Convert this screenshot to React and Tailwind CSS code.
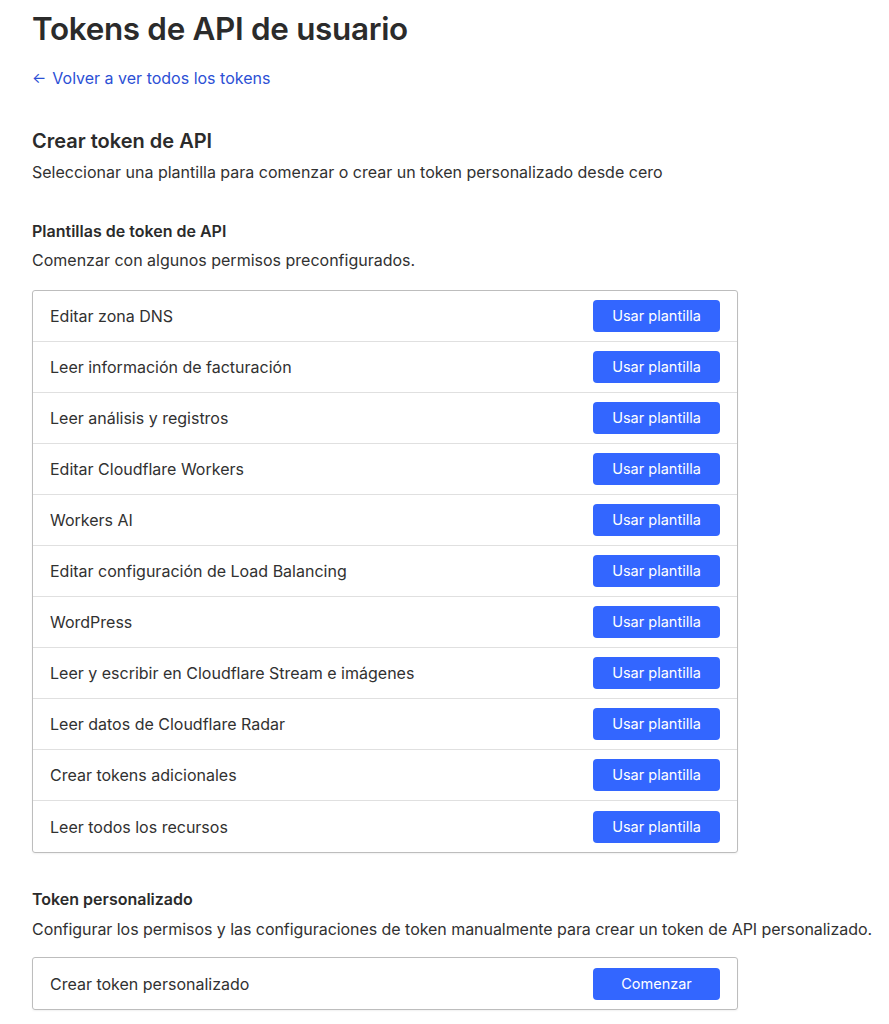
import React from 'react';

const templates = [
  'Editar zona DNS',
  'Leer información de facturación',
  'Leer análisis y registros',
  'Editar Cloudflare Workers',
  'Workers AI',
  'Editar configuración de Load Balancing',
  'WordPress',
  'Leer y escribir en Cloudflare Stream e imágenes',
  'Leer datos de Cloudflare Radar',
  'Crear tokens adicionales',
  'Leer todos los recursos',
];

function Row({ label, action, last }) {
  return (
    <div className={`flex items-center justify-between h-[51px] pl-[17px] pr-[17px] ${last ? '' : 'border-b border-[#e0e0e0]'}`}>
      <span className="text-[16px] text-[#313131]">{label}</span>
      <button className="w-[127px] h-[32px] rounded-[4px] bg-[#3366ff] text-white text-[14.5px]">{action}</button>
    </div>
  );
}

export default function App() {
  return (
    <div className="min-h-screen bg-white text-[#313131] px-8 pt-[9px] pb-4" style={{ fontFamily: 'Inter, "Noto Sans", sans-serif' }}>
      <h1 className="text-[31.4px] leading-[40px] font-semibold tracking-[-0.3px] text-[#2b2b2b]">Tokens de API de usuario</h1>

      <a href="#" className="mt-[17px] inline-flex items-center gap-[6px] text-[16px] text-[#2c50d5]">
        <span className="text-[15px]">←</span>
        <span>Volver a ver todos los tokens</span>
      </a>

      <h2 className="mt-[37px] text-[20px] leading-[28px] font-semibold text-[#2b2b2b]">Crear token de API</h2>
      <p className="mt-[5px] text-[16px] leading-[24px]">Seleccionar una plantilla para comenzar o crear un token personalizado desde cero</p>

      <h3 className="mt-[35px] text-[16px] leading-[24px] font-semibold text-[#2b2b2b]">Plantillas de token de API</h3>
      <p className="mt-[5px] text-[16px] leading-[24px]">Comenzar con algunos permisos preconfigurados.</p>

      <div className="mt-[18px] w-[706px] border border-[#bdbdbd] rounded-[3px] shadow-[0_1px_2px_rgba(0,0,0,0.06)]">
        {templates.map((t, i) => (
          <Row key={t} label={t} action="Usar plantilla" last={i === templates.length - 1} />
        ))}
      </div>

      <h3 className="mt-[34px] text-[16px] leading-[24px] font-semibold text-[#2b2b2b]">Token personalizado</h3>
      <p className="mt-[6px] text-[16px] leading-[24px] whitespace-nowrap tracking-[-0.05px]">Configurar los permisos y las configuraciones de token manualmente para crear un token de API personalizado.</p>

      <div className="mt-[16px] w-[706px] border border-[#bdbdbd] rounded-[3px] shadow-[0_1px_2px_rgba(0,0,0,0.06)]">
        <Row label="Crear token personalizado" action="Comenzar" last />
      </div>
    </div>
  );
}
